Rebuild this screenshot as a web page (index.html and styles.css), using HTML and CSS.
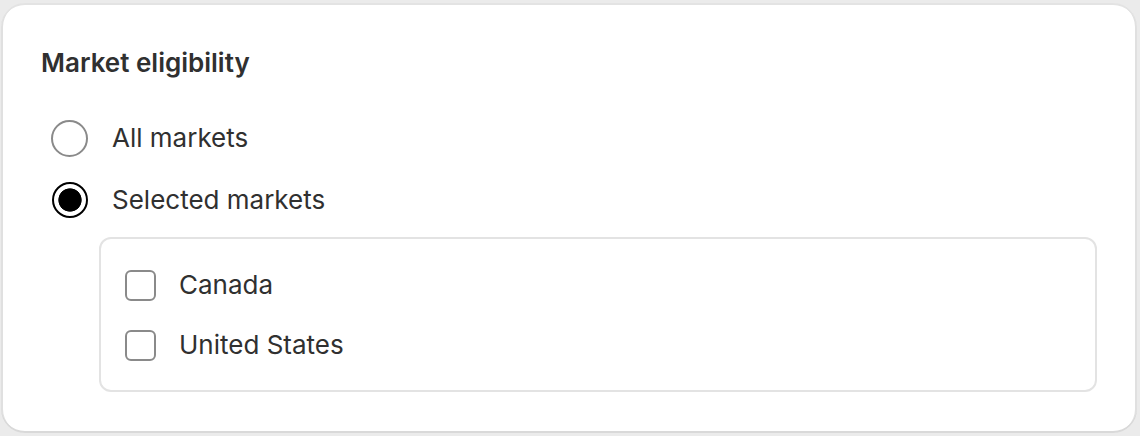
FILE: index.html
```html
<!DOCTYPE html>
<html lang="en">
<head>
<meta charset="utf-8">
<title>Market eligibility</title>
<link rel="stylesheet" href="styles.css">
</head>
<body>
<section class="card">
  <h2 class="title">Market eligibility</h2>
  <div class="radios">
    <label class="choice">
      <input class="radio" type="radio" name="market">
      <span class="choice-label">All markets</span>
    </label>
    <label class="choice">
      <input class="radio" type="radio" name="market" checked>
      <span class="choice-label">Selected markets</span>
    </label>
  </div>
  <div class="markets">
    <label class="check-row">
      <input class="checkbox" type="checkbox">
      <span class="check-label">Canada</span>
    </label>
    <label class="check-row">
      <input class="checkbox" type="checkbox">
      <span class="check-label">United States</span>
    </label>
  </div>
</section>
</body>
</html>
```

FILE: styles.css
```css
* { box-sizing: border-box; }

html, body {
  margin: 0;
  background: #ebebeb;
}

body {
  padding: 3px 3px 3px 1px;
  font-family: Inter, "Noto Sans", sans-serif;
  color: #303030;
}

.card {
  height: 430px;
  background: #ffffff;
  border-radius: 24px;
  padding: 40px 40px 41px 40px;
  box-shadow: inset 0 2px 0 0 #e3e3e3, inset 0 -2px 0 0 #d9d9d9, inset 2px 0 0 0 #e0e0e0, inset -2px 0 0 0 #e0e0e0;
}

.title {
  margin: 0;
  font-size: 26px;
  line-height: 40px;
  font-weight: 600;
  color: #303030;
}

.radios {
  display: flex;
  flex-direction: column;
  gap: 22px;
  margin: 35px 0 0 10px;
}

.choice {
  display: flex;
  align-items: center;
  gap: 24px;
  height: 40px;
}

.radio {
  appearance: none;
  -webkit-appearance: none;
  margin: 0;
  width: 37px;
  height: 37px;
  border-radius: 50%;
  border: 2px solid #8a8a8a;
  background: #fff;
  flex: none;
  position: relative;
}

.radio:checked {
  width: 36px;
  height: 36px;
  margin-left: 1px;
  margin-right: 0;
  border: 2px solid #000;
  background: radial-gradient(circle, #000 0 11.3px, #fff 12px);
}

.choice-label,
.check-label {
  font-size: 26px;
  line-height: 40px;
  color: #303030;
}

.markets {
  margin: 17px 0 0 58px;
  border: 2px solid #e3e3e3;
  border-radius: 12px;
  padding: 26px 24px 25px 24px;
  display: flex;
  flex-direction: column;
  gap: 20px;
}

.check-row {
  display: flex;
  align-items: center;
  gap: 23px;
  height: 40px;
}

.checkbox {
  appearance: none;
  -webkit-appearance: none;
  margin: 0;
  width: 31px;
  height: 31px;
  border: 2px solid #8a8a8a;
  border-radius: 6px;
  background: #fff;
  flex: none;
}
```
